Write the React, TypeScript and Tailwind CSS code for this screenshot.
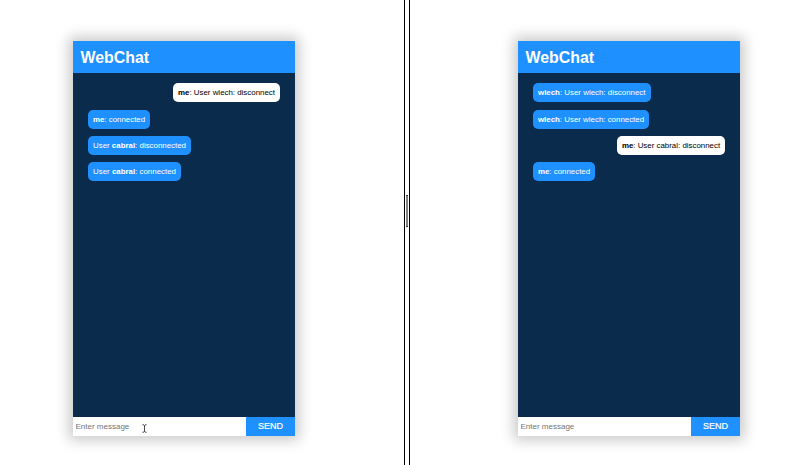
import type { ReactNode } from "react";

type Message = { id: number; mine?: boolean; width: string; body: ReactNode };

const leftMessages: Message[] = [
  { id: 1, mine: true, width: "w-[107px]", body: <><b>me</b>: User wlech: disconnect</> },
  { id: 2, width: "w-[62px]", body: <><b>me</b>: connected</> },
  { id: 3, width: "w-[103px]", body: <>User <b>cabral</b>: disconnected</> },
  { id: 4, width: "w-[93px]", body: <>User <b>cabral</b>: connected</> },
];

const rightMessages: Message[] = [
  { id: 1, width: "w-[117.5px]", body: <><b>wlech</b>: User wlech: disconnect</> },
  { id: 2, width: "w-[116px]", body: <><b>wlech</b>: User wlech: connected</> },
  { id: 3, mine: true, width: "w-[108px]", body: <><b>me</b>: User cabral: disconnect</> },
  { id: 4, width: "w-[62px]", body: <><b>me</b>: connected</> },
];

function Bubble({ message }: { message: Message }) {
  const tone = message.mine ? "self-end bg-white text-black" : "self-start bg-[#1e90ff] text-white";
  return (
    <div className={`flex h-[19px] items-center justify-center whitespace-nowrap rounded-[5px] pt-px text-[7.9px] leading-none ${message.width} ${tone}`}>
      <span>{message.body}</span>
    </div>
  );
}

function ChatWindow({ messages, children }: { messages: Message[]; children?: ReactNode }) {
  return (
    <section className="flex h-[395.5px] w-[222px] flex-col bg-[#0a2b4b] shadow-[0_0_13px_4px_rgba(0,0,0,0.22)]">
      <header className="flex h-[32.5px] shrink-0 items-center bg-[#1e90ff] pl-[7.5px] pt-[3px]">
        <h1 className="text-[15.9px] font-bold leading-none text-white">WebChat</h1>
      </header>
      <div className="flex flex-1 flex-col gap-[7.2px] px-[15px] pt-[10.4px]">
        {messages.map((m) => <Bubble key={m.id} message={m} />)}
      </div>
      <form className="flex h-[19.5px] shrink-0">
        <div className="relative flex w-[173px] items-center bg-white">
          <input
            className="w-full bg-transparent pl-[2.5px] pt-px text-[8px] leading-none text-black outline-none placeholder:text-[#757575]"
            placeholder="Enter message"
          />
          {children}
        </div>
        <button type="button" className="flex-1 bg-[#1e90ff] pt-px text-[9px] leading-none text-white [-webkit-text-stroke:0.2px_white]">SEND</button>
      </form>
    </section>
  );
}

function TextCursor() {
  return (
    <svg className="absolute left-[69px] top-[7.5px] h-[9px] w-[5px]" viewBox="0 0 5 9" fill="none" stroke="#333" strokeWidth="0.9">
      <path d="M.5.7Q2.5.7 2.5 1.7V7.3Q2.5 8.3.5 8.3M4.5.7Q2.5.7 2.5 1.7M2.5 7.3Q2.5 8.3 4.5 8.3" />
    </svg>
  );
}

export default function App() {
  return (
    <main className="flex h-[465px] w-[800px] overflow-hidden bg-white font-['Liberation_Sans',Arial,sans-serif]">
      <div className="w-[404px] pl-[73px] pt-[40.5px]">
        <ChatWindow messages={leftMessages}>
          <TextCursor />
        </ChatWindow>
      </div>
      <div className="flex w-1.5 items-start justify-center border-x border-black pt-[195px]">
        <div className="h-8 w-0.5 border-y border-[#333] bg-[#85807d]" />
      </div>
      <div className="flex-1 pl-[108px] pt-[40.5px]">
        <ChatWindow messages={rightMessages} />
      </div>
    </main>
  );
}
